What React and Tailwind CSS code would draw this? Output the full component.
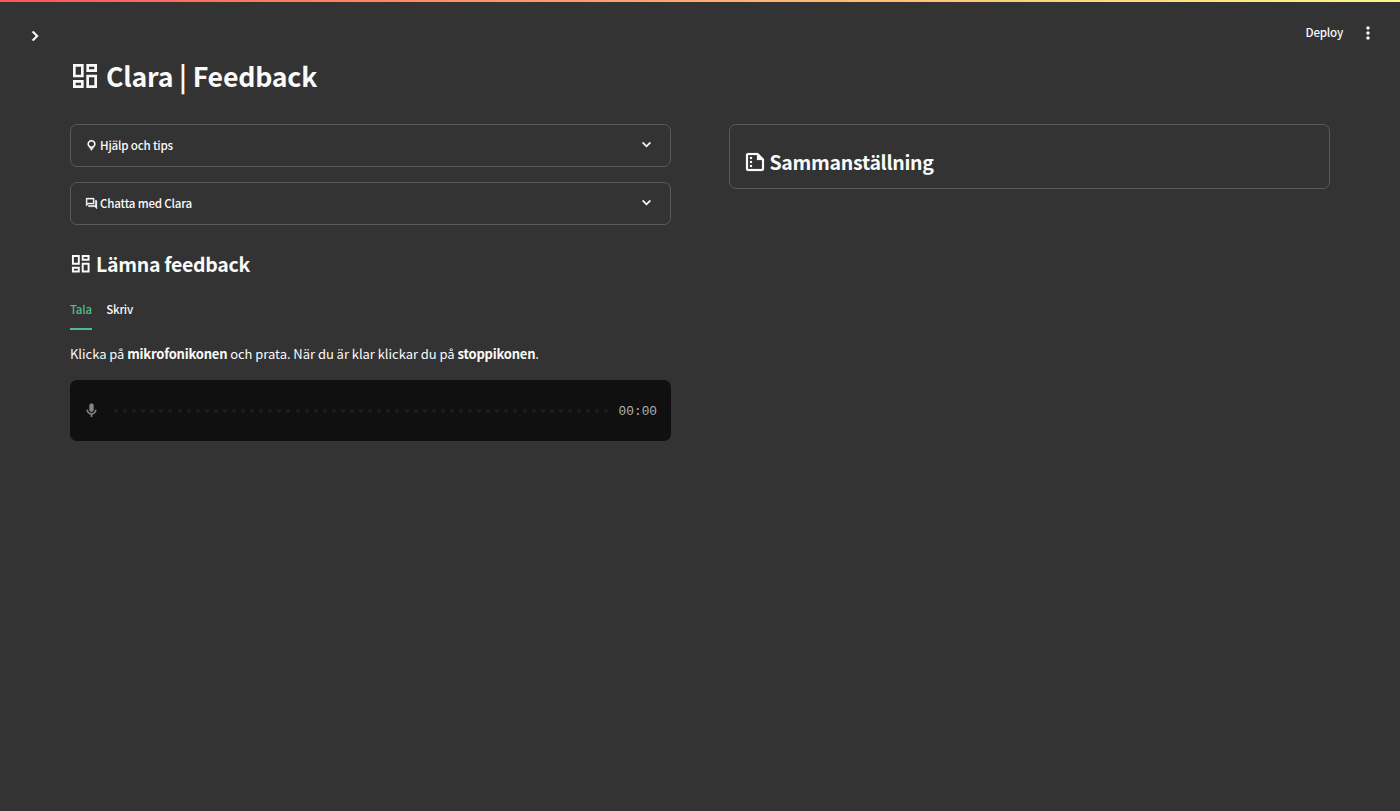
const DASHBOARD =
  'M19 5v2h-4V5h4M9 5v6H5V5h4m10 8v6h-4v-6h4M9 17v2H5v-2h4M21 3h-8v6h8V3zM11 3H3v10h8V3zm10 8h-8v10h8V11zm-10 4H3v6h8v-6z';
const BULB =
  'M12 2c-4.200 0-7.500 3.200-7.500 7.300 0 2.700 1.500 4.900 3.900 6.200V17.500h7.200v-2c2.400-1.300 3.900-3.500 3.900-6.200C19.500 5.200 16.200 2 12 2zm0 2.600c2.700 0 4.800 2 4.800 4.700S14.700 14 12 14 7.200 12 7.200 9.300 9.300 4.600 12 4.600zM8.800 17h6.400L12 21.500z';
const FORUM =
  'M15 4v7H5.170L4 12.170V4h11m1-2H3c-.55 0-1 .45-1 1v14l4-4h10c.55 0 1-.45 1-1V3c0-.55-.45-1-1-1zm5 4h-2v9H6v2c0 .55.45 1 1 1h11l4 4V7c0-.55-.45-1-1-1z';
const SUMMARY =
  'M15 3H5c-1.100 0-2 .9-2 2v14c0 1.100.9 2 2 2h14c1.100 0 2-.9 2-2V9l-6-6zM5 19V5h9v5h5v9H5zM7 7h2v2H7zM7 11h2v2H7zM7 15h2v2H7z';
const MIC =
  'M12 14c1.660 0 3-1.340 3-3V5c0-1.660-1.340-3-3-3S9 3.340 9 5v6c0 1.660 1.340 3 3 3zm5-3c0 2.760-2.240 5-5 5s-5-2.240-5-5H5c0 3.530 2.610 6.430 6 6.920V21h2v-3.080c3.390-.49 6-3.390 6-6.920h-2z';
const CHEVRON_DOWN = 'M7.410 8.590 12 13.170l4.590-4.580L18 10l-6 6-6-6z';
const CHEVRON_RIGHT = 'M10 6 8.590 7.410 13.170 12l-4.580 4.590L10 18l6-6z';
const MORE =
  'M12 8c1.100 0 2-.9 2-2s-.9-2-2-2-2 .9-2 2 .9 2 2 2zm0 2c-1.100 0-2 .9-2 2s.9 2 2 2 2-.9 2-2-.9-2-2-2zm0 6c-1.100 0-2 .9-2 2s.9 2 2 2 2-.9 2-2-.9-2-2-2z';

function Icon({ path, className, weight = 0 }) {
  return (
    <svg
      viewBox="0 0 24 24"
      fill="currentColor"
      fillRule="evenodd"
      stroke="currentColor"
      strokeWidth={weight}
      strokeLinejoin="round"
      className={`shrink-0 ${className}`}
      aria-hidden="true"
    >
      <path d={path} />
    </svg>
  );
}

function Expander({ icon, label, weight }) {
  return (
    <button className="flex h-[43px] w-full items-center rounded-[7px] border border-[#5a5a5a] pr-[15px] pl-[14px]">
      <Icon path={icon} weight={weight} className="-mt-[1px] size-[13px]" />
      <span className="-mt-[2px] ml-[2px] text-[11.6px] leading-[20px] font-medium tracking-[-0.2px]">{label}</span>
      <Icon path={CHEVRON_DOWN} weight={0.6} className="-mt-[2px] ml-auto size-[17px]" />
    </button>
  );
}

function Recorder() {
  return (
    <div className="mt-[16px] flex h-[61px] items-center rounded-[7px] bg-[#101010] pr-[14px] pl-[13px]">
      <Icon path={MIC} weight={0.3} className="size-[17px] text-[#858585]" />
      <div className="ml-[14px] flex w-[495px] justify-between">
        {Array.from({ length: 55 }, (_, i) => (
          <span key={i} className="size-[4px] rounded-full bg-[#1e1e1e]" />
        ))}
      </div>
      <span className="mt-[3px] ml-auto font-['Liberation_Mono',monospace] text-[12.8px] leading-[16px] text-[#b4b4b4]">
        00:00
      </span>
    </div>
  );
}

export default function App() {
  return (
    <div className="flex h-[811px] flex-col overflow-hidden bg-[#333] font-['Noto_Sans_CJK_JP',sans-serif] whitespace-nowrap text-[#fafafa]">
      <div className="h-[2px] shrink-0 bg-linear-to-r from-[#fb5557] to-[#fbf78c]" />
      <header className="flex h-[54px] shrink-0 justify-between pr-[22px] pl-[25px]">
        <Icon path={CHEVRON_RIGHT} weight={0.7} className="mt-[24px] size-[20px]" />
        <div className="mt-[20px] flex h-[22px] items-center gap-[15px]">
          <span className="-mt-[2px] text-[11.6px] leading-[20px] font-medium tracking-[-0.23px]">Deploy</span>
          <Icon path={MORE} className="-mt-[1px] size-[20px]" />
        </div>
      </header>
      <main className="px-[70px]">
        <h1 className="-ml-[1px] flex h-[40px] items-center">
          <Icon path={DASHBOARD} className="size-[32px]" />
          <span className="ml-[5px] text-[26.7px] leading-[40px] font-bold tracking-[-0.2px]">Clara | Feedback</span>
        </h1>
        <div className="mt-[28px] grid grid-cols-2 items-start gap-[58px]">
          <section>
            <div className="flex flex-col gap-[15px]">
              <Expander icon={BULB} label="Hjälp och tips" weight={0.2} />
              <Expander icon={FORUM} label="Chatta med Clara" weight={0.6} />
            </div>
            <h2 className="mt-[23px] -ml-[1px] flex h-[32px] items-center">
              <Icon path={DASHBOARD} className="size-[23.500px]" />
              <span className="ml-[3.500px] text-[19.500px] leading-[32px] font-bold tracking-[-0.3px]">Lämna feedback</span>
            </h2>
            <nav className="mt-[19px] flex gap-[14.500px] text-[11.500px] leading-[20px] font-medium tracking-[-0.25px]">
              <span className="h-[31px] border-b-2 border-[#4fbd88] text-[#4fbd88]">Tala</span>
              <span>Skriv</span>
            </nav>
            <p className="mt-[14px] text-[13px] leading-[20px] tracking-[-0.04px] [&>b]:tracking-[-0.2px]">
              Klicka på <b>mikrofonikonen</b> och prata. När du är klar klickar du på <b>stoppikonen</b>.
            </p>
            <Recorder />
          </section>
          <section className="flex h-[65px] items-center rounded-[7px] border border-[#5a5a5a] px-[12.500px] pt-[10px]">
            <Icon path={SUMMARY} weight={0.2} className="size-[24px]" />
            <h2 className="ml-[3px] text-[19.500px] leading-[32px] font-bold tracking-[-0.3px]">Sammanställning</h2>
          </section>
        </div>
      </main>
    </div>
  );
}
